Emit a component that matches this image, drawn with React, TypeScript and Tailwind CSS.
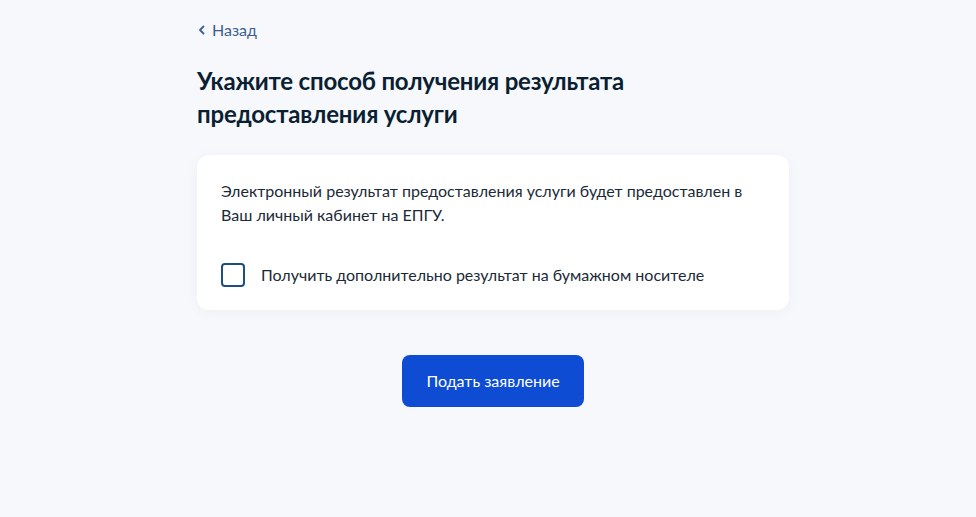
import React from "react";

export default function App() {
  return (
    <div className="min-h-[517px] w-full bg-[#f6f8fb] font-['Lato','Noto_Sans',sans-serif] text-[#0b1f33]">
      <div className="flex justify-center pl-[10px]">
        <div className="w-[592px] pt-[19px]">
          <a className="flex items-center gap-[6px] text-[16px] leading-[22px] text-[#3b5f8f]" href="#">
            <svg width="8" height="10" viewBox="0 0 8 10" className="ml-[1px]">
              <path d="M5.5 1.5 L2 5 L5.5 8.5" fill="none" stroke="#3b5f8f" strokeWidth="1.8" strokeLinecap="round" strokeLinejoin="round" />
            </svg>
            <span>Назад</span>
          </a>
          <h1 className="mt-[23px] text-[24px] font-bold leading-[33px] tracking-[-0.2px]">
            Укажите способ получения результата
            <br />
            предоставления услуги
          </h1>
          <div className="mt-[25px] rounded-[12px] bg-white px-[24px] pt-[24px] pb-[23px] shadow-[0_2px_14px_rgba(11,31,51,0.04)]">
            <p className="text-[16px] leading-[24px] text-[#1b2a38]">
              Электронный результат предоставления услуги будет предоставлен в Ваш личный кабинет на ЕПГУ.
            </p>
            <label className="mt-[36px] flex items-center gap-[16px]">
              <span className="h-[24px] w-[24px] shrink-0 rounded-[4px] border-2 border-[#1d4e80] bg-white" />
              <span className="text-[16px] leading-[24px] text-[#1b2a38]">
                Получить дополнительно результат на бумажном носителе
              </span>
            </label>
          </div>
          <div className="mt-[45px] flex justify-center">
            <button className="h-[52px] rounded-[8px] bg-[#0d4cd3] px-[24px] text-[16px] text-white">
              Подать заявление
            </button>
          </div>
        </div>
      </div>
    </div>
  );
}
